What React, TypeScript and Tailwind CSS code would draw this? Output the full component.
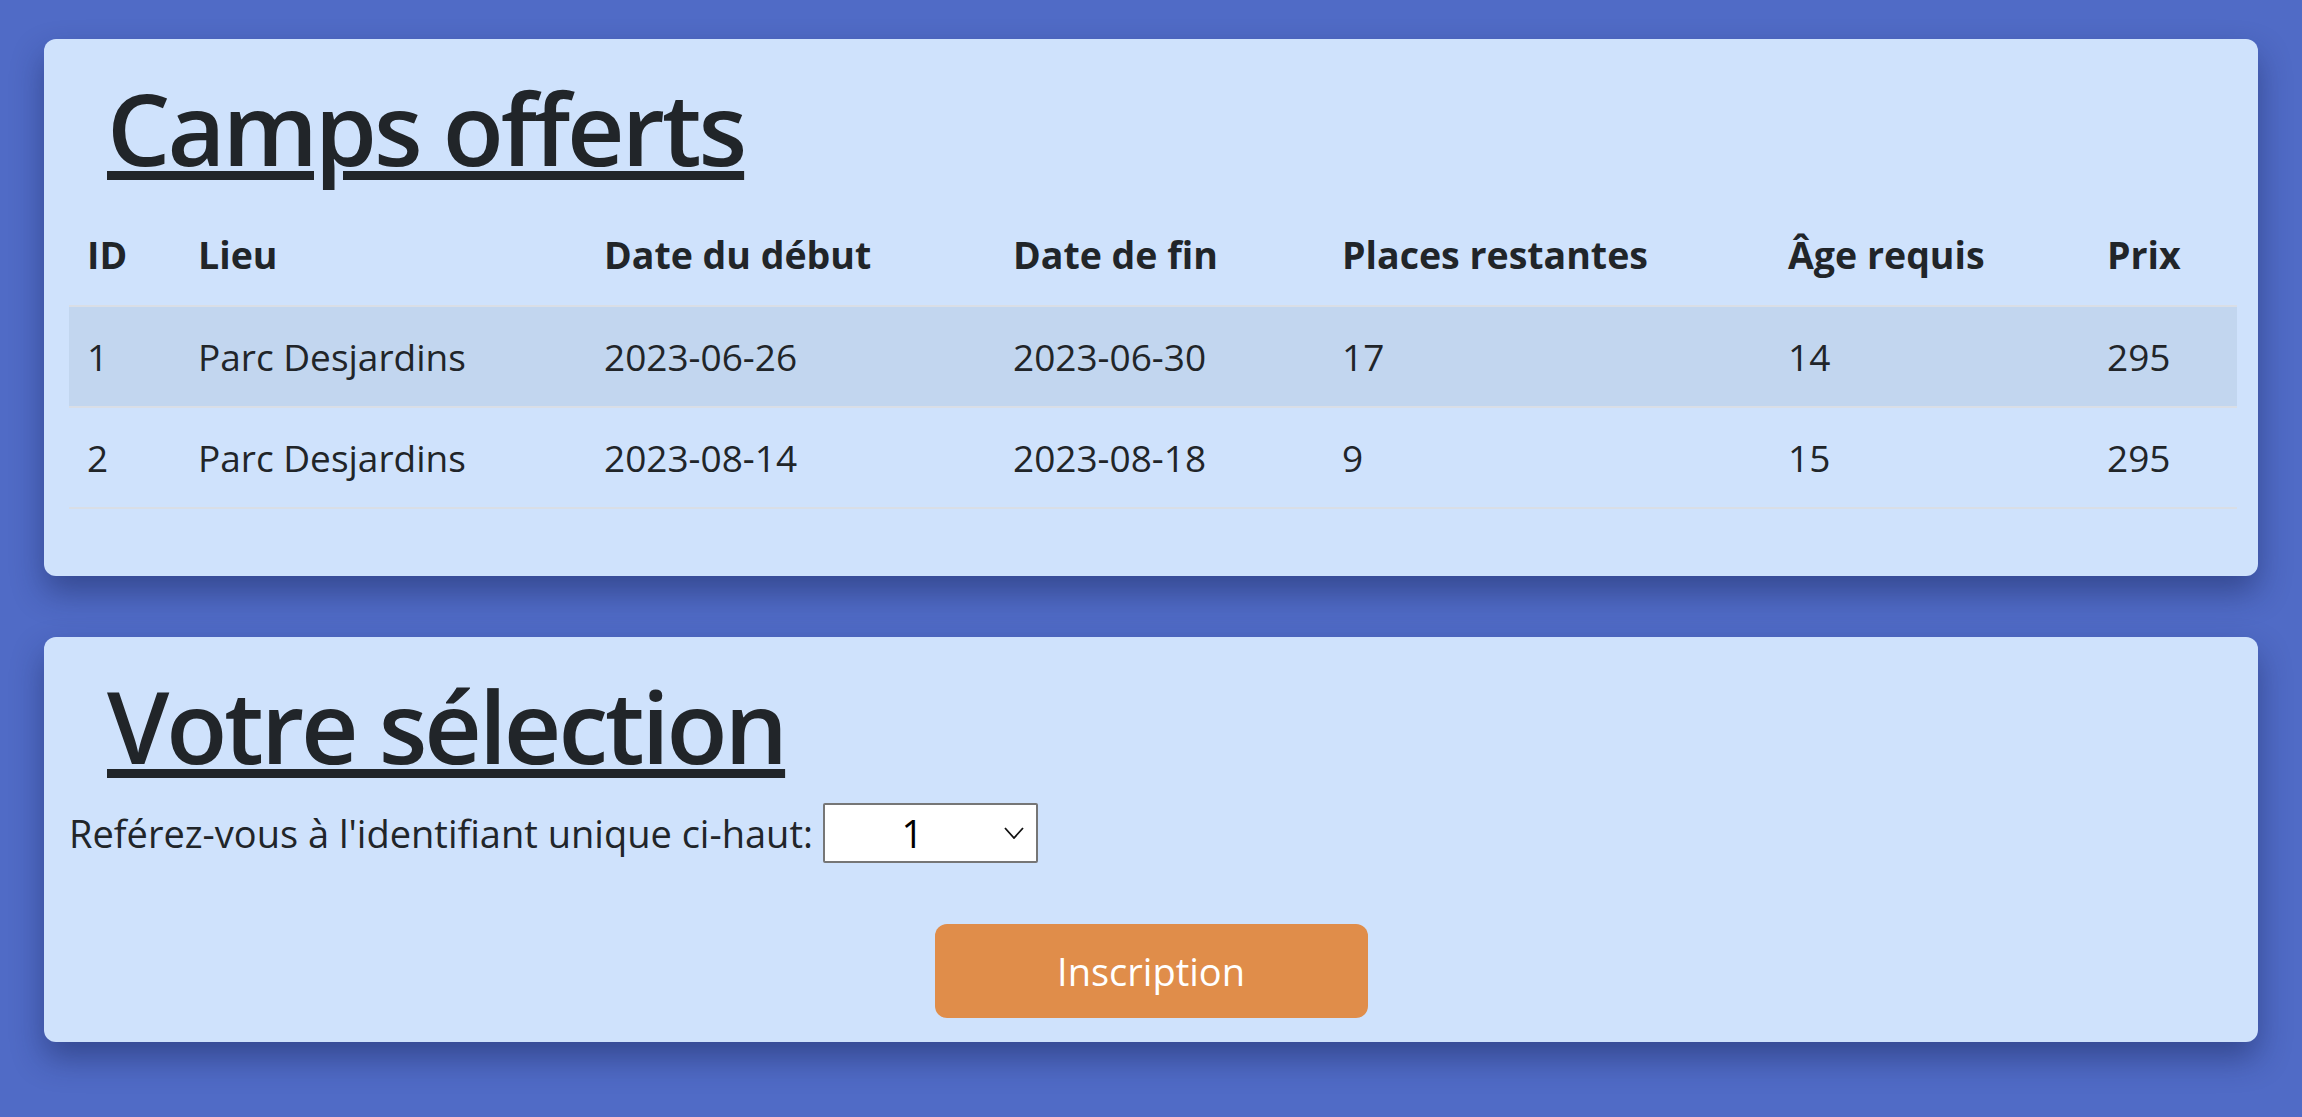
import { useState } from 'react'

const camps = [
  { id: 1, lieu: 'Parc Desjardins', debut: '2023-06-26', fin: '2023-06-30', places: 17, age: 14, prix: 295 },
  { id: 2, lieu: 'Parc Desjardins', debut: '2023-08-14', fin: '2023-08-18', places: 9, age: 15, prix: 295 },
]

const columns = [
  { label: 'ID', width: 'w-[111px]' },
  { label: 'Lieu', width: 'w-[406px]' },
  { label: 'Date du début', width: 'w-[409px]' },
  { label: 'Date de fin', width: 'w-[329px]' },
  { label: 'Places restantes', width: 'w-[446px]' },
  { label: 'Âge requis', width: 'w-[319px]' },
  { label: 'Prix', width: 'w-[148px]' },
]

function Title({ children }: { children: string }) {
  return (
    <h1 className="pl-[38px] pt-[28px] pb-[18px] text-[100px] font-semibold leading-[1.2] tracking-[-3px] text-[#212529] underline decoration-[9px] underline-offset-[5px]">
      {children}
    </h1>
  )
}

export default function App() {
  const [selected, setSelected] = useState('1')

  return (
    <div
      className="min-h-screen bg-[#506bc6] px-[44px] pt-[39px] pb-[78px] text-[#212529]"
      style={{ fontFamily: '"Open Sans", "Noto Sans", sans-serif' }}
    >
      <div className="flex flex-col gap-[61px]">
        <section className="rounded-[12px] bg-[#cfe2fc] px-[25px] pb-[67px] shadow-[0_16px_32px_rgba(20,30,80,0.45)]">
          <Title>Camps offerts</Title>
          <table className="w-full table-fixed border-collapse text-left text-[37px]">
            <colgroup>
              {columns.map((col) => (
                <col key={col.label} className={col.width} />
              ))}
            </colgroup>
            <thead>
              <tr className="h-[101px] border-b-2 border-[#d9dee6]">
                {columns.map((col) => (
                  <th key={col.label} className="pl-[18px] pr-[20px] text-[37.5px] font-bold">
                    {col.label}
                  </th>
                ))}
              </tr>
            </thead>
            <tbody>
              {camps.map((camp, i) => (
                <tr
                  key={camp.id}
                  className={`h-[101px] border-b-2 border-[#d9dee6] ${i % 2 === 0 ? 'bg-[#c2d6ef]' : ''}`}
                >
                  <td className="pl-[18px] pr-[20px]">{camp.id}</td>
                  <td className="pl-[18px] pr-[20px]">{camp.lieu}</td>
                  <td className="pl-[18px] pr-[20px]">{camp.debut}</td>
                  <td className="pl-[18px] pr-[20px]">{camp.fin}</td>
                  <td className="pl-[18px] pr-[20px]">{camp.places}</td>
                  <td className="pl-[18px] pr-[20px]">{camp.age}</td>
                  <td className="pl-[18px] pr-[20px]">{camp.prix}</td>
                </tr>
              ))}
            </tbody>
          </table>
        </section>

        <section className="rounded-[12px] bg-[#cfe2fc] px-[25px] pb-[24px] shadow-[0_16px_32px_rgba(20,30,80,0.45)]">
          <Title>Votre sélection</Title>
          <div className="flex items-center text-[38px]">
            <label htmlFor="camp-select" className="pr-[10px]">
              Reférez-vous à l'identifiant unique ci-haut:
            </label>
            <div className="relative">
              <select
                id="camp-select"
                value={selected}
                onChange={(e) => setSelected(e.target.value)}
                className="h-[60px] w-[215px] appearance-none rounded-[2px] border-2 border-[#767676] bg-white pr-[36px] text-[38px] text-black [text-align-last:center]"
              >
                {camps.map((camp) => (
                  <option key={camp.id} value={camp.id}>
                    {camp.id}
                  </option>
                ))}
              </select>
              <svg
                className="pointer-events-none absolute right-[14px] top-[24px] h-[12px] w-[20px]"
                viewBox="0 0 20 12"
                fill="none"
                stroke="#111"
                strokeWidth="1.8"
              >
                <path d="M1 1l9 10 9-10" />
              </svg>
            </div>
          </div>
          <div className="mt-[61px] flex justify-center">
            <button
              type="button"
              className="h-[94px] w-[433px] rounded-[12px] bg-[#e08d4a] text-[38px] text-white"
            >
              Inscription
            </button>
          </div>
        </section>
      </div>
    </div>
  )
}
